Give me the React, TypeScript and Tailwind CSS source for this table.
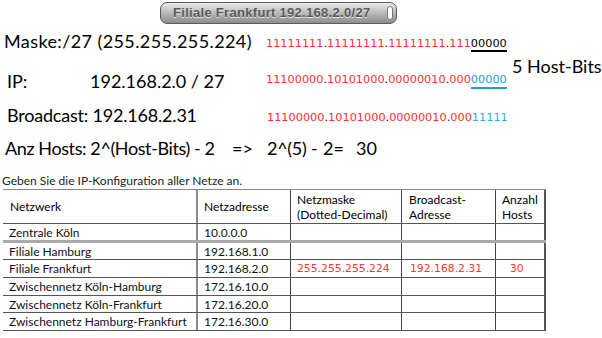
const rows = [
  { name: "Zentrale Köln", net: "10.0.0.0", h: "h-[19px]", line: "border-b-[3px] border-b-[#a9a9a9]" },
  { name: "Filiale Hamburg", net: "192.168.1.0", h: "h-[17px]", line: "border-b border-b-[#555]" },
  {
    name: "Filiale Frankfurt",
    net: "192.168.2.0",
    h: "h-[18px]",
    line: "border-b border-b-[#555]",
    mask: "255.255.255.224",
    bc: "192.168.2.31",
    hosts: "30",
  },
  { name: "Zwischennetz Köln-Hamburg", net: "172.16.10.0", h: "h-[18px]", line: "border-b border-b-[#555]" },
  { name: "Zwischennetz Köln-Frankfurt", net: "172.16.20.0", h: "h-[17px]", line: "border-b border-b-[#555]" },
  { name: "Zwischennetz Hamburg-Frankfurt", net: "172.16.30.0", h: "h-[18px]", line: "border-b border-b-[#555]" },
];

function Bits({ head, tail, tailClass }: { head: string[]; tail: string; tailClass: string }) {
  return (
    <span className="whitespace-pre">
      {head.map((part, i) => (
        <span key={i}>
          <span className="text-[#ff3030]">{part}</span>
          {i < 3 && <span className="text-black">.</span>}
        </span>
      ))}
      <span className={tailClass}>{tail}</span>
    </span>
  );
}

export default function App() {
  return (
    <div className="relative w-[602px] h-[338px] overflow-hidden bg-white text-black font-['Lato',sans-serif]">
      {/* title bar */}
      <div className="h-[26px] pt-[2px] pl-[160px]">
        <div className="relative flex items-center w-[237px] h-[22px] pl-[12px] rounded-[7px] border border-[#5a5a5a] bg-linear-to-b from-[#ececec] via-[#b9b9b9] to-[#8c8c8c]">
          <span className="font-['Liberation_Sans',sans-serif] font-bold text-[13px] tracking-[0.3px] text-[#5a5a5a] [text-shadow:0_1px_0_#e6e6e6]">
            Filiale Frankfurt 192.168.2.0/27
          </span>
          <span className="absolute right-[3px] top-[3px] w-[6px] h-[14px] rounded-[3px] bg-white border border-[#777]" />
        </div>
      </div>

      {/* mask / ip / broadcast */}
      <div className="mt-[4px] grid grid-cols-[266px_246px_90px] grid-rows-[32px_36px_37px] text-[18px] leading-[22px]">
        <div className="pl-[4px] tracking-[0.4px]">Maske:/27 (255.255.255.224)</div>
        <div className="pt-[7px] font-['DejaVu_Sans',sans-serif] text-[11.3px] leading-[13px]">
          <span className="whitespace-pre">
            <span className="text-[#ff3030]">11111111</span>.<span className="text-[#ff3030]">11111111</span>.
            <span className="text-[#ff3030]">11111111</span>.<span className="text-[#ff3030]">111</span>
            <span className="border-b-2 border-black">00000</span>
          </span>
        </div>
        <div className="row-span-2 self-center pt-[4px] whitespace-nowrap">5 Host-Bits</div>

        <div className="flex pt-[8px]">
          <span className="pl-[7px] w-[90px]">IP:</span>
          <span>192.168.2.0 / 27</span>
        </div>
        <div className="pt-[11px] font-['DejaVu_Sans',sans-serif] text-[11.3px] leading-[13px]">
          <Bits
            head={["11100000", "10101000", "00000010", "000"]}
            tail="00000"
            tailClass="text-[#1e9ce0] border-b-2 border-[#1e9ce0] pb-[1px]"
          />
        </div>

        <div className="pl-[7px] pt-[6px] tracking-[-0.2px]">Broadcast: 192.168.2.31</div>
        <div className="pt-[13px] pl-[1px] font-['DejaVu_Sans',sans-serif] text-[11.3px] leading-[13px]">
          <Bits head={["11100000", "10101000", "00000010", "000"]} tail="11111" tailClass="text-[#2eb0ea]" />
        </div>
      </div>

      {/* host count */}
      <div className="h-[39px] pt-[2px] pl-[5px] flex items-start text-[18px] leading-[22px] whitespace-pre">
        <span className="w-[227px] tracking-[-0.4px]">Anz Hosts: 2^(Host-Bits) - 2</span>
        <span className="w-[35px]">=&gt;</span>
        <span className="w-[44px] tracking-[-0.3px]">2^(5)</span>
        <span className="w-[12px]">-</span>
        <span className="w-[33px]">2=</span>
        <span>30</span>
      </div>

      <div className="h-[15px] pl-[2px] text-[12px] leading-[14px] text-[#222]">
        Geben Sie die IP-Konfiguration aller Netze an.
      </div>

      {/* table */}
      <div className="ml-[3px] w-[543px] border-t border-t-[#8a8a8a] text-[12px] leading-[15px] text-[#111]">
        <div className="flex h-[34px] border-b border-b-[#555] text-black">
          <div className="w-[195px] flex items-center pl-[7px] border-r-2 border-r-[#8c8c8c]">Netzwerk</div>
          <div className="w-[93px] flex items-center pl-[6px] border-r border-r-[#444]">Netzadresse</div>
          <div className="w-[111px] flex items-center pl-[6px] border-r border-r-[#444]">
            Netzmaske
            <br />
            (Dotted-Decimal)
          </div>
          <div className="w-[94px] flex items-center pl-[7px] border-r border-r-[#444]">
            Broadcast-
            <br />
            Adresse
          </div>
          <div className="w-[50px] flex items-center pl-[6px] border-r-2 border-r-[#555]">
            Anzahl
            <br />
            Hosts
          </div>
        </div>
        {rows.map((r) => (
          <div key={r.name} className={`flex ${r.h} ${r.line}`}>
            <div className="w-[195px] flex items-center pl-[6px] border-r-2 border-r-[#8c8c8c]">{r.name}</div>
            <div className="w-[93px] flex items-center pl-[6px] border-r border-r-[#444]">{r.net}</div>
            <div className="w-[111px] flex items-center pl-[6px] border-r border-r-[#444] font-['DejaVu_Sans',sans-serif] text-[10.8px] text-[#ff3535]">
              {r.mask}
            </div>
            <div className="w-[94px] flex items-center pl-[8px] border-r border-r-[#444] font-['DejaVu_Sans',sans-serif] text-[10.8px] text-[#ff3535]">
              {r.bc}
            </div>
            <div className="w-[50px] flex items-center pl-[14px] border-r-2 border-r-[#555] font-['DejaVu_Sans',sans-serif] text-[10.8px] text-[#ff3535]">
              {r.hosts}
            </div>
          </div>
        ))}
      </div>
    </div>
  );
}
